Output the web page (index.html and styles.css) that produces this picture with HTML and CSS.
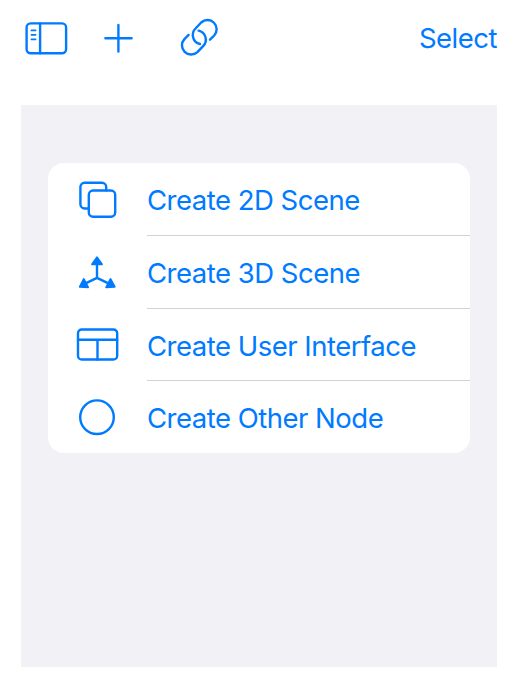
FILE: index.html
```html
<!DOCTYPE html>
<html lang="en">
<head>
    <meta charset="UTF-8">
    <meta name="viewport" content="width=device-width, initial-scale=1.0">
    <title>Create Scene</title>
    <link rel="stylesheet" href="styles.css">
</head>
<body>
    <header class="toolbar">
        <svg class="icon" width="44" height="36" viewBox="24 20 44 36">
            <rect x="26.6" y="23.4" width="39.5" height="29.8" rx="4"/>
            <path d="M40.1 23.4v29.8"/>
            <path class="thin" d="M31.4 30.4h4.2M31.4 34.8h4.2M31.4 39.3h4.2"/>
        </svg>
        <svg class="icon plus" width="32" height="32" viewBox="102 22 32 32">
            <path d="M105.4 38.2h26.2M118.4 25v26.6"/>
        </svg>
        <svg class="icon link" width="42" height="42" viewBox="178 17 42 42">
            <path d="M210 39.7L214.2 35.5A9.2 9.2 0 0 0 201.2 22.5L195.5 28.5A9.2 9.2 0 0 0 200 44"/>
            <path d="M188.6 34.9L184.4 39.1A9.2 9.2 0 0 0 197.4 52.1L203.1 46.1A9.2 9.2 0 0 0 198.6 30.6"/>
        </svg>
        <a class="select">Select</a>
    </header>

    <main class="panel">
        <ul class="menu">
            <li class="item">
                <svg class="icon" width="44" height="44" viewBox="75 178 44 44">
                    <path d="M88.7 208.5H84.6A4.2 4.2 0 0 1 80.4 204.3V187A4.2 4.2 0 0 1 84.6 182.8H102A4.2 4.2 0 0 1 106.2 187V190.3"/>
                    <rect x="88.8" y="190.5" width="26.4" height="26.2" rx="4.2"/>
                </svg>
                <span class="label">Create 2D Scene</span>
            </li>
            <li class="item">
                <svg class="icon" width="44" height="44" viewBox="75 250 44 44">
                    <path d="M97 263v14.8M84 284.2L97 277.8L110 284.2"/>
                    <path class="head" d="M97 257.2L102 264.3H92zM79.7 286.8L83.8 279L88.2 287.3zM114.7 286.8L110.5 279L106.1 287.3z"/>
                </svg>
                <span class="label">Create 3D Scene</span>
            </li>
            <li class="item">
                <svg class="icon" width="44" height="44" viewBox="75 323 44 44">
                    <rect x="78" y="329.5" width="39.2" height="30" rx="3.8"/>
                    <path d="M78 339.7h39.2M97.5 339.7v19.8"/>
                </svg>
                <span class="label">Create User Interface</span>
            </li>
            <li class="item">
                <svg class="icon" width="44" height="44" viewBox="75 395 44 44">
                    <circle cx="97" cy="417.2" r="16.8"/>
                </svg>
                <span class="label">Create Other Node</span>
            </li>
        </ul>
    </main>
</body>
</html>
```
FILE: styles.css
```css
* {
    box-sizing: border-box;
}
body {
    margin: 0;
    background: #fff;
    color: #007aff;
    font-family: Inter, "Liberation Sans", sans-serif;
    font-size: 27.5px;
    letter-spacing: -0.5px;
}

/* Toolbar */
.toolbar {
    display: flex;
    align-items: center;
    height: 76px;
    padding: 0 21px 0 24px;
}
.plus {
    margin-left: 34px;
}
.link {
    margin-left: 44px;
}
.select {
    margin-left: auto;
}

/* Icons */
.icon {
    flex: none;
    fill: none;
    stroke: #007aff;
    stroke-width: 2.4;
    stroke-linecap: round;
    stroke-linejoin: round;
}
.thin {
    stroke-width: 1.7;
}
.head {
    fill: #007aff;
    stroke-width: 1.8;
}

/* Menu */
.panel {
    height: 561.6px;
    margin: 29.4px 21px 0 21.4px;
    padding: 58px 26.6px 0;
    background: #f2f1f6;
}
.menu {
    height: 290px;
    margin: 0;
    padding: 0;
    list-style: none;
    background: #fff;
    border-radius: 16px;
    overflow: hidden;
}
.item {
    display: flex;
    align-items: center;
    height: 72.6px;
    padding-left: 27px;
}
.label {
    flex: 1;
    height: 100%;
    margin-left: 28px;
    line-height: 74px;
    white-space: nowrap;
    border-bottom: 1px solid #d2d2d4;
}
.item:last-child .label {
    border-bottom: none;
}
```
